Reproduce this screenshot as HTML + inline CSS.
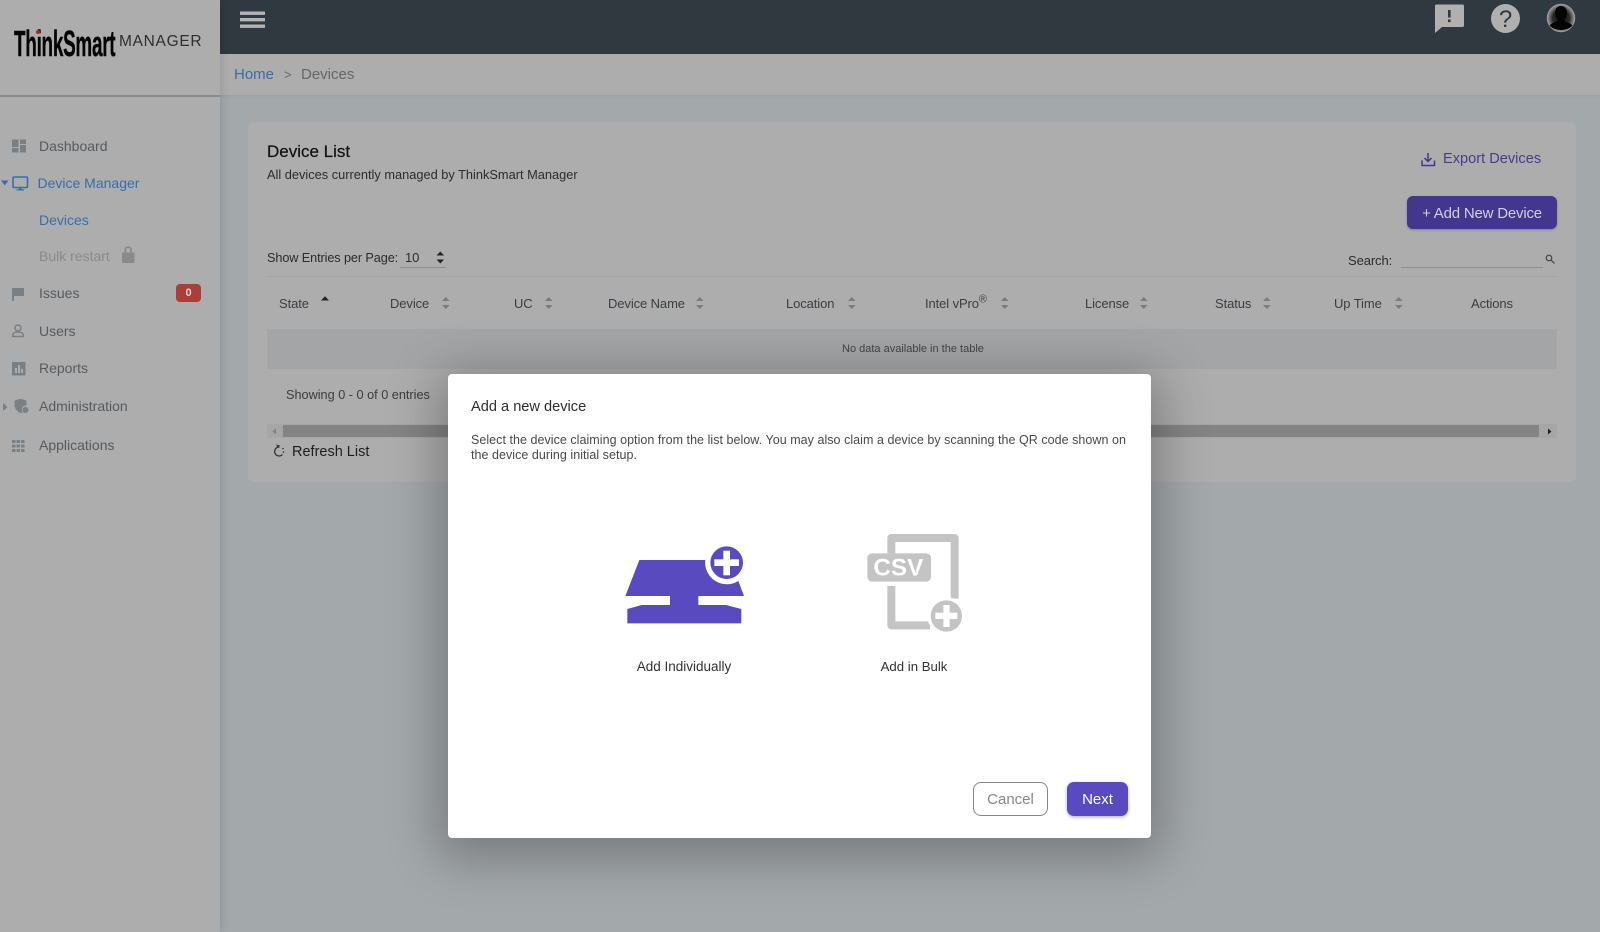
<!DOCTYPE html>
<html><head><meta charset="utf-8"><style>
html,body{margin:0;padding:0;width:1600px;height:932px;overflow:hidden;background:#a3a8ab}
body{position:relative;font-family:"Liberation Sans",sans-serif}
.b{position:absolute}
.t{position:absolute;white-space:nowrap;height:20px;line-height:20px;font-size:14px;color:#565b5f}
.h{color:#3a3d41;font-size:13px;letter-spacing:-.1px}
svg{position:absolute;overflow:visible}
</style></head><body>
<div class="b" style="left:220px;top:54px;width:1380px;height:41px;background:#adadad;box-shadow:0 1px 2px rgba(0,0,0,.06)"></div>
<div class="b" style="left:220px;top:0;width:1380px;height:54px;background:#2f393f"></div>
<div class="b" style="left:0;top:0;width:220px;height:932px;background:#adadad;box-shadow:0 0 10px rgba(0,0,0,.16)"></div>
<div class="b" style="left:0;top:95px;width:220px;height:2px;background:#8a8a8a"></div>
<div class="b" style="left:248px;top:122px;width:1328px;height:360px;background:#adadad;border-radius:6px"></div>

<div class="t" style="left:14px;top:29px;height:30px;line-height:30px;font-size:36px;font-weight:bold;color:#050505;letter-spacing:-.5px;transform-origin:0 50%;transform:scaleX(.525);-webkit-text-stroke:.4px #050505">ThinkSmart</div>
<div class="b" style="left:36px;top:30px;width:4px;height:4px;border-radius:50%;background:#a52a2a"></div>
<div class="t" style="left:119px;top:32px;font-size:15.500px;color:#2e2e2e;letter-spacing:.7px">MANAGER</div>

<div class="t" style="left:39px;top:136px">Dashboard</div>
<div class="t" style="left:37.500px;top:173px;color:#366fa9">Device Manager</div>
<div class="t" style="left:39px;top:210px;color:#366fa9">Devices</div>
<div class="t" style="left:39px;top:246px;color:#8a8a8a">Bulk restart</div>
<div class="t" style="left:39px;top:283px">Issues</div>
<div class="t" style="left:39px;top:321px">Users</div>
<div class="t" style="left:39px;top:358px">Reports</div>
<div class="t" style="left:39px;top:396px">Administration</div>
<div class="t" style="left:39px;top:435px">Applications</div>
<div class="b" style="left:176px;top:284px;width:25px;height:18px;background:#a93f39;border-radius:4px;color:#d8d8d8;font-size:11px;font-weight:bold;line-height:18px;text-align:center">0</div>

<svg style="left:0;top:0" width="1600" height="932" viewBox="0 0 1600 932">
 <defs><radialGradient id="av"><stop offset="0" stop-color="#111"/><stop offset=".6" stop-color="#2a2a2a"/><stop offset="1" stop-color="#a8a8a8"/></radialGradient></defs>
 <g fill="#7a7f83">
  <rect x="12" y="139.500" width="6.500" height="7.500"/><rect x="20" y="139.500" width="6" height="4.500"/><rect x="12" y="148" width="6.500" height="4.500"/><rect x="20" y="145" width="6" height="7.500"/>
  <path d="M12 288h12v8h-10v5h-2z"/>
  <path fill-rule="evenodd" d="M12 362h13.500v13.500h-13.500zM15 368v5h2v-5zM18 365v8h2v-8zM21 369v4h2v-4z"/>
  <path d="M14.500 401c3-2.500 9-2.500 12 0v4.500c-2-.3-4 .8-4.500 3-.4 1.700 0 3.500 1 4.500h-2.500c-3.500-1.500-6-4.500-6-8.500z"/>
  <circle cx="25.500" cy="410" r="3"/>
  <path d="M3 403l4.500 4-4.500 4z"/>
  <rect x="12" y="440" width="3.500" height="3"/><rect x="16.500" y="440" width="3.500" height="3"/><rect x="21" y="440" width="3.500" height="3"/>
  <rect x="12" y="444.500" width="3.500" height="3"/><rect x="16.500" y="444.500" width="3.500" height="3"/><rect x="21" y="444.500" width="3.500" height="3"/>
  <rect x="12" y="449" width="3.500" height="3"/><rect x="16.500" y="449" width="3.500" height="3"/><rect x="21" y="449" width="3.500" height="3"/>
 </g>
 <g fill="none" stroke="#7a7f83" stroke-width="1.500"><circle cx="18" cy="328" r="3"/><path d="M12.800 336.500v-1.500c0-2 2.500-3 5.200-3s5.200 1 5.200 3v1.500z"/></g>
 <path d="M1 180.500h7.500l-3.700 5z" fill="#366fa9"/>
 <g fill="none" stroke="#366fa9" stroke-width="1.600"><rect x="13" y="177" width="14.500" height="10.500" rx="1"/></g>
 <path d="M19 187.500h2.500v1.700h2.500v1.300h-7.500v-1.300h2.500z" fill="#366fa9"/>
 <path d="M122 252.500h12.500v9.500c0 .5-.5 1-1 1h-10.500c-.5 0-1-.5-1-1zM124.500 252.500v-2.500c0-5 7.500-5 7.500 0v2.500h-1.700v-2.500c0-2.800-4.100-2.800-4.100 0v2.500z" fill="#8a8a8a"/>
 <g fill="#b4b4b4"><rect x="240" y="11.500" width="25" height="3.400"/><rect x="240" y="18" width="25" height="3.400"/><rect x="240" y="24.500" width="25" height="3.400"/></g>
 <path d="M1436.500 4.500h26a1.500 1.500 0 0 1 1.500 1.500v19.500a1.500 1.500 0 0 1-1.500 1.500h-20.500l-7 6v-27a1.500 1.500 0 0 1 1.500-1.500z" fill="#b0b0b0"/>
 <rect x="1448" y="10" width="2.600" height="7.500" fill="#2f393f"/><rect x="1448" y="19.500" width="2.600" height="2.600" fill="#2f393f"/>
 <circle cx="1505.500" cy="18.500" r="14.500" fill="#b0b0b0"/>
 <text x="1505.500" y="27" text-anchor="middle" font-family="Liberation Sans" font-size="24" fill="#2f393f">?</text>
 <circle cx="1561" cy="18" r="14.200" fill="url(#av)"/>
 <path d="M1561 6c-4.200 0-6.200 3.500-6 7.500.1 2.500 1 4.500 2.500 6 .3 1-.5 2-2 2.500-2.500.9-5 2-6 3.500 2.500 2.700 6 4.500 11.500 4.500s9-1.800 11.500-4.500c-1-1.500-3.500-2.600-6-3.500-1.500-.5-2.300-1.500-2-2.500 1.500-1.500 2.400-3.500 2.500-6 .2-4-1.800-7.500-6-7.500z" fill="#050505"/>
 <g fill="none" stroke="#42368f" stroke-width="1.500"><path d="M1428 153v8M1424.500 158l3.500 3.500 3.500-3.500"/><path d="M1422 160.500v5h12.500v-5"/></g>
 <path d="M321 300.500l4-4.200 4 4.200z" fill="#222"/>
 <g fill="#7c7c7c">
  <path d="M442 301l3.800-4 3.800 4zM442 305l3.800 4 3.800-4z"/>
  <path d="M545 301l3.800-4 3.800 4zM545 305l3.800 4 3.800-4z"/>
  <path d="M696 301l3.800-4 3.800 4zM696 305l3.800 4 3.800-4z"/>
  <path d="M848 301l3.800-4 3.800 4zM848 305l3.800 4 3.800-4z"/>
  <path d="M1001 301l3.800-4 3.800 4zM1001 305l3.800 4 3.800-4z"/>
  <path d="M1140 301l3.800-4 3.800 4zM1140 305l3.800 4 3.800-4z"/>
  <path d="M1263 301l3.800-4 3.800 4zM1263 305l3.800 4 3.800-4z"/>
  <path d="M1395 301l3.800-4 3.800 4zM1395 305l3.800 4 3.800-4z"/>
 </g>
 <path d="M436.500 255.500l3.800-4 3.800 4zM436.500 259.500l3.800 4 3.800-4z" fill="#222"/>
 <g fill="none" stroke="#444" stroke-width="1.200"><circle cx="1549" cy="258" r="2.800"/><path d="M1551 260l3.500 3.500"/></g>
 <path d="M279.500 447a4.500 4.500 0 1 0 3 7.500" fill="none" stroke="#333" stroke-width="1.300"/>
 <path d="M276 444.500l4 1-2 2.500z" fill="#333"/>
 <circle cx="283" cy="448.500" r=".8" fill="#333"/><circle cx="283.500" cy="452" r=".8" fill="#333"/>
</svg>

<div class="t" style="left:234px;top:65px;font-size:15px;color:#366fa9">Home</div>
<div class="t" style="left:284px;top:65px;font-size:13px;color:#666">&gt;</div>
<div class="t" style="left:301px;top:65px;font-size:15px;color:#666">Devices</div>

<div class="t" style="left:267px;top:142px;font-size:17px;color:#111;-webkit-text-stroke:.2px #111">Device List</div>
<div class="t" style="left:267px;top:165px;font-size:12.800px;color:#2c2c2c">All devices currently managed by ThinkSmart Manager</div>
<div class="t" style="left:1443px;top:149px;font-size:14.600px;color:#483c8c">Export Devices</div>
<div class="b" style="left:1407px;top:196px;width:150px;height:33px;background:#42368f;border-radius:6px;color:#d2cfe2;font-size:15px;letter-spacing:-.2px;line-height:35px;text-align:center;box-shadow:0 1px 2px rgba(0,0,0,.25)">+ Add New Device</div>
<div class="t h" style="left:267px;top:248px;color:#2c2c2c;font-size:12.700px">Show Entries per Page:</div>
<div class="t h" style="left:405px;top:248px;color:#2c2c2c">10</div>
<div class="b" style="left:400px;top:267px;width:46px;height:1px;background:#8f8f8f"></div>
<div class="t h" style="left:1348px;top:251px;color:#2c2c2c">Search:</div>
<div class="b" style="left:1401px;top:267px;width:142px;height:1px;background:#8f8f8f"></div>

<div class="b" style="left:267px;top:276px;width:1290px;height:1px;background:#a2a5a8"></div>
<div class="t h" style="left:279px;top:294px">State</div>
<div class="t h" style="left:390px;top:294px">Device</div>
<div class="t h" style="left:514px;top:294px">UC</div>
<div class="t h" style="left:608px;top:294px">Device Name</div>
<div class="t h" style="left:786px;top:294px">Location</div>
<div class="t h" style="left:925px;top:294px">Intel vPro<sup style="font-size:11px;line-height:0">®</sup></div>
<div class="t h" style="left:1085px;top:294px">License</div>
<div class="t h" style="left:1215px;top:294px">Status</div>
<div class="t h" style="left:1334px;top:294px">Up Time</div>
<div class="t h" style="left:1471px;top:294px">Actions</div>

<div class="b" style="left:267px;top:329px;width:1290px;height:40px;background:#a4a5a7"></div>
<div class="t" style="left:842px;top:339px;font-size:11px;color:#444;letter-spacing:0">No data available in the table</div>
<div class="t" style="left:286px;top:385px;font-size:12.700px;color:#3c3c3c">Showing 0 - 0 of 0 entries</div>
<div class="b" style="left:267px;top:424px;width:1290px;height:14px;background:#a6a6a6"></div>
<div class="b" style="left:283px;top:425px;width:1256px;height:12px;background:#848484"></div>
<svg style="left:0;top:0" width="1600" height="932"><path d="M276 428.500v6l-3.500-3z" fill="#7f7f7f"/><path d="M1548 428.500v6l3.500-3z" fill="#222"/></svg>
<div class="t" style="left:292px;top:441px;height:20px;line-height:22px;font-size:14.500px;color:#1e1e1e">Refresh List</div>

<div class="b" style="left:448px;top:374px;width:703px;height:464px;background:#fff;border-radius:4px;box-shadow:0 10px 50px 10px rgba(0,0,0,.28)"></div>
<div class="t" style="left:471px;top:396.500px;font-size:14.600px;color:#2e2e2e">Add a new device</div>
<div class="t" style="left:471px;top:430px;font-size:12.500px;color:#4a4a4a;letter-spacing:.04px">Select the device claiming option from the list below. You may also claim a device by scanning the QR code shown on</div>
<div class="t" style="left:471px;top:445px;font-size:12.500px;color:#4a4a4a;letter-spacing:.04px">the device during initial setup.</div>

<svg style="left:600px;top:510px" width="400" height="180" viewBox="0 0 1200 540">
 <path d="M118 150H316A65 65 0 0 0 415 213L432 258H295V285H378L424 297V340H82V297L125 285H210V258H76Z" fill="#5a4abf"/>
 <circle cx="380" cy="158" r="49" fill="#5a4abf"/>
 <rect x="370" y="122" width="20" height="74" fill="#fff"/><rect x="343" y="148" width="74" height="20" fill="#fff"/>
 <path d="M874 130V84H1064V266" fill="none" stroke="#c4c4c4" stroke-width="24" stroke-linejoin="round"/>
 <path d="M874 228V346H990" fill="none" stroke="#c4c4c4" stroke-width="24" stroke-linejoin="round"/>
 <rect x="802" y="130" width="191" height="85" rx="15" fill="#c4c4c4"/>
 <text x="895" y="197" text-anchor="middle" font-family="Liberation Sans" font-weight="bold" font-size="72" textLength="150" lengthAdjust="spacingAndGlyphs" fill="#fff">CSV</text>
 <circle cx="1039" cy="318" r="57" fill="#fff"/>
 <circle cx="1039" cy="318" r="47" fill="#c4c4c4"/>
 <rect x="1030" y="285" width="19" height="66" fill="#fff"/><rect x="1006" y="308" width="66" height="19" fill="#fff"/>
</svg>
<div class="t" style="left:584px;width:200px;text-align:center;top:656.500px;font-size:13.500px;color:#333">Add Individually</div>
<div class="t" style="left:814px;width:200px;text-align:center;top:656.500px;font-size:13.200px;color:#333">Add in Bulk</div>

<div class="b" style="left:973px;top:782px;width:73px;height:32px;border:1px solid #888;border-radius:8px;background:#fff;color:#85888c;font-size:15px;line-height:34px;text-align:center">Cancel</div>
<div class="b" style="left:1067px;top:782px;width:61px;height:34px;border-radius:7px;background:#5a4abf;color:#fff;font-size:15px;line-height:36px;text-align:center;box-shadow:0 1px 3px rgba(90,74,191,.5)">Next</div>
</body></html>
